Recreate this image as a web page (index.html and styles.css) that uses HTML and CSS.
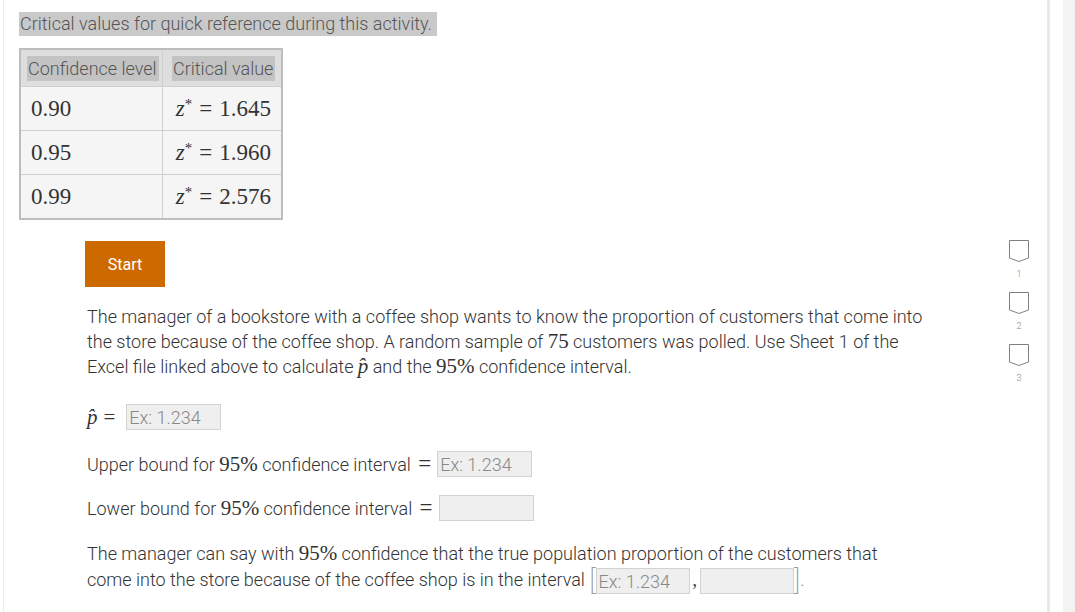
FILE: index.html
```html
<!DOCTYPE html>
<html lang="en">
<head>
<meta charset="utf-8">
<title>Critical values</title>
<link rel="stylesheet" href="styles.css">
</head>
<body>
<div class="page">
  <div class="main">
    <div class="caption">Critical values for quick reference during this activity.</div>
    <table class="crit">
      <thead>
        <tr><th class="c1"><span class="hl">Confidence level</span></th><th class="c2"><span class="hl">Critical value</span></th></tr>
      </thead>
      <tbody>
        <tr><td class="c1 m">0.90</td><td class="c2 m"><i>z</i><sup>*</sup><span class="eq">=</span>1.645</td></tr>
        <tr><td class="c1 m">0.95</td><td class="c2 m"><i>z</i><sup>*</sup><span class="eq">=</span>1.960</td></tr>
        <tr><td class="c1 m">0.99</td><td class="c2 m"><i>z</i><sup>*</sup><span class="eq">=</span>2.576</td></tr>
      </tbody>
    </table>
    <div class="activity">
      <button class="start" type="button">Start</button>
      <p class="prompt">The manager of a bookstore with a coffee shop wants to know the proportion of customers that come into the store because of the coffee shop. A random sample of <span class="m num">75</span> customers was polled. Use Sheet 1 of the Excel file linked above to calculate <span class="m"><i>p&#770;</i></span> and the <span class="m num">95%</span> confidence interval.</p>
      <div class="row r1"><span class="m"><i>p&#770;</i><span class="eq">=</span></span><input class="box" type="text" placeholder="Ex: 1.234"></div>
      <div class="row r2">Upper bound for&nbsp;<span class="m num">95%</span>&nbsp;confidence interval&nbsp;<span class="m eq">=</span><input class="box" type="text" placeholder="Ex: 1.234"></div>
      <div class="row r3">Lower bound for&nbsp;<span class="m num">95%</span>&nbsp;confidence interval&nbsp;<span class="m eq">=</span><input class="box" type="text"></div>
      <p class="final">The manager can say with <span class="m num">95%</span> confidence that the true population proportion of the customers that<br>come into the store because of the coffee shop is in the interval <span class="brk">[</span><input class="box b2" type="text" placeholder="Ex: 1.234"><span class="comma">,</span><input class="box b2" type="text"><span class="brk">]</span><span class="dot">.</span></p>
    </div>
  </div>
  <div class="side">
    <div class="cp">
      <svg width="20" height="23" viewBox="0 0 20 23"><path d="M0.5 0.5 H19.5 V18 L10 21.5 L0.5 18 Z" fill="none" stroke="#808080" stroke-width="1"/></svg>
      <span class="cpn">1</span>
    </div>
    <div class="cp">
      <svg width="20" height="23" viewBox="0 0 20 23"><path d="M0.5 0.5 H19.5 V18 L10 21.5 L0.5 18 Z" fill="none" stroke="#808080" stroke-width="1"/></svg>
      <span class="cpn">2</span>
    </div>
    <div class="cp">
      <svg width="20" height="23" viewBox="0 0 20 23"><path d="M0.5 0.5 H19.5 V18 L10 21.5 L0.5 18 Z" fill="none" stroke="#808080" stroke-width="1"/></svg>
      <span class="cpn">3</span>
    </div>
  </div>
  <div class="divider"></div>
  <div class="gap"></div>
  <div class="track"></div>
</div>
</body>
</html>
```

FILE: styles.css
```css
html, body {
  margin: 0;
  padding: 0;
  background: #fff;
}
body {
  font-family: Roboto, "Liberation Sans", sans-serif;
  font-weight: 300;
  font-size: 18px;
  color: #333;
}
.page {
  display: flex;
  height: 612px;
  overflow: hidden;
}
.main {
  width: 986px;
  margin-left: 3px;
  border-left: 1px solid #ececec;
  padding-left: 15px;
  padding-top: 12px;
}
.caption {
  display: inline-block;
  background: #c9c9c9;
  color: #555;
  line-height: 24px;
  padding: 0 5px 0 1px;
}
.crit {
  margin-top: 12px;
  border-collapse: collapse;
  border: 2px solid #bdbdbd;
  background: #f5f5f5;
  table-layout: fixed;
  width: 264px;
}
.crit th {
  background: #dedede;
  font-weight: 300;
  text-align: left;
  color: #555;
  padding: 0 0 0 6px;
  height: 36px;
  border: 1px solid #cfcfcf;
  white-space: nowrap;
}
.crit th.c1 { width: 135px; }
.crit th.c2 { padding-left: 9px; }
.hl {
  display: inline-block;
  vertical-align: middle;
  background: #c3c3c3;
  line-height: 25px;
  padding: 0 2px 0 1px;
}
.crit td {
  height: 43px;
  padding: 0 10px;
  border: 1px solid #cfcfcf;
}
.crit td.c2 {
  text-align: right;
  padding-right: 10px;
  white-space: nowrap;
}
.m {
  font-family: "Liberation Serif", "DejaVu Serif", serif;
  font-weight: 400;
  color: #333;
}
.crit td.m { font-size: 23px; }
.m i { font-style: italic; }
.m sup {
  font-size: 0.65em;
  vertical-align: 0.5em;
  line-height: 0;
  margin-left: 0;
}
.eq { margin: 0 7px; }
.num { font-size: 21px; }
.activity {
  padding-left: 66px;
}
.start {
  display: block;
  margin-top: 21px;
  width: 80px;
  height: 46px;
  background: #cc6a00;
  border: none;
  color: #fff;
  font-family: Roboto, "Liberation Sans", sans-serif;
  font-weight: 400;
  font-size: 16px;
  padding: 0;
}
.prompt {
  margin: 17px 0 0 2px;
  width: 845px;
  line-height: 25px;
}
.prompt .m { font-size: 21px; line-height: 0; }
.row {
  display: flex;
  align-items: center;
  height: 28px;
  margin-left: 2px;
  white-space: nowrap;
}
.row .m { font-size: 21px; }
.r1 { margin-top: 24px; }
.r2 { margin-top: 19px; }
.r3 { margin-top: 16px; }
.r1 .m { margin-right: 5px; }
.r1 .eq { margin: 0 6px 0 6px; }
.r2 .eq, .r3 .eq { margin: 0 6px 0 3px; font-size: 23px; }
.box {
  box-sizing: border-box;
  width: 95px;
  height: 26px;
  background: #efefef;
  border: 1px solid #d2d2d2;
  padding: 0 2px;
  font-family: Roboto, "Liberation Sans", sans-serif;
  font-weight: 300;
  font-size: 18px;
  color: #333;
  outline: none;
}
.box::placeholder { color: #888; }
.final {
  margin: 19px 0 0 2px;
  line-height: 26px;
}
.final .m { font-size: 21px; line-height: 0; }
.final .box { vertical-align: middle; }
.b2 { width: 94px; }
.brk {
  font-size: 28px;
  color: #999;
  vertical-align: middle;
  line-height: 0;
  font-weight: 200;
}
.brk:first-of-type { margin-left: 2px; }
.comma { margin: 0 3px; font-family: "Liberation Serif", serif; }
.dot { color: #888; }
.side {
  width: 38px;
  padding-left: 4px;
  padding-top: 240px;
  display: flex;
  flex-direction: column;
}
.cp {
  width: 20px;
  height: 52px;
  display: flex;
  flex-direction: column;
  align-items: center;
}
.cp svg { display: block; }
.cpn {
  font-family: Roboto, "Liberation Sans", sans-serif;
  font-size: 9px;
  color: #888;
  margin-top: 6px;
}
.divider { width: 3px; background: #e8e8e8; }
.gap { width: 13px; background: #fff; }
.track { width: 12px; background: #f3f3f3; }
```
